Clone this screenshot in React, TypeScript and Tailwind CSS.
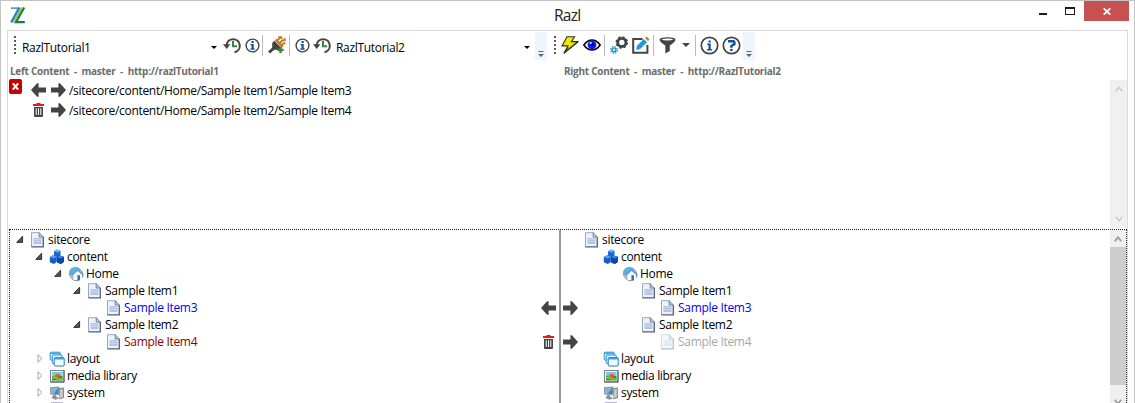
import React from "react";

const INK = "#444444";

function Arrow({ left = false }: { left?: boolean }) {
  return (
    <svg width="15" height="14" viewBox="0 0 15 14" className={left ? "shrink-0 -scale-x-100" : "shrink-0"}>
      <path d="M0 4.5H7.4V0.3H8.9L15 7L8.9 13.7H7.4V9.5H0Z" fill={INK} />
    </svg>
  );
}

function Trash() {
  return (
    <svg width="11" height="14" viewBox="0 0 11 14" className="shrink-0">
      <path d="M3.5 0H7.5V1H11V3H0V1H3.5Z" fill="#e01f10" />
      <path d="M1 4H10V13L9.3 14H1.7L1 13ZM2.7 5.2V12H3.7V5.2ZM5 5.2V12H6V5.2ZM7.3 5.2V12H8.3V5.2Z" fill={INK} fillRule="evenodd" />
    </svg>
  );
}

function History() {
  return (
    <svg width="19" height="17" viewBox="0 0 19 17" className="shrink-0">
      <path d="M3.6 8A6.6 6.6 0 1 1 11.5 15.2" fill="none" stroke={INK} strokeWidth="2" />
      <path d="M0 7.3H7.4L3.7 12Z" fill={INK} />
      <path d="M10 4V9.2H14" fill="none" stroke="#348a3c" strokeWidth="2" />
    </svg>
  );
}

function InfoSmall() {
  return (
    <svg width="15" height="15" viewBox="0 0 15 15" className="shrink-0">
      <circle cx="7.5" cy="7.5" r="6.4" fill="none" stroke={INK} strokeWidth="1.4" />
      <path d="M6.5 3H8.7V5H6.5ZM5.5 6H8.7V10.6H9.7V11.8H5.3V10.6H6.5V7.2H5.5Z" fill="#0b519c" />
    </svg>
  );
}

function InfoLarge() {
  return (
    <svg width="19" height="19" viewBox="0 0 19 19" className="shrink-0">
      <circle cx="9.5" cy="9.5" r="8.2" fill="none" stroke={INK} strokeWidth="1.7" />
      <path d="M8.5 4.4H10.7V6.4H8.5ZM7.2 7.5H10.7V13H11.9V14.4H7.1V13H8.5V8.9H7.2Z" fill="#0b519c" />
    </svg>
  );
}

function Help() {
  return (
    <svg width="19" height="19" viewBox="0 0 19 19" className="shrink-0">
      <circle cx="9.5" cy="9.5" r="8.2" fill="none" stroke={INK} strokeWidth="1.7" />
      <path d="M6 5.3H11.5L12.4 6.2V8L9.4 10.1V11.8" fill="none" stroke="#0b519c" strokeWidth="2.5" />
      <path d="M8.1 12.9H10.6V15.1H8.1Z" fill="#0b519c" />
    </svg>
  );
}

function Plug() {
  return (
    <svg width="18" height="18" viewBox="0 0 18 18" className="shrink-0">
      <path d="M7.6 3.6L14.8 10.8" stroke="#c57b20" strokeWidth="2.6" />
      <path d="M9 4.6L11.2 2.6V1.2H13.4V3M13.6 9.4L15.8 7.2H17.4M11.6 7L14.6 4.2H16.8V2.2" stroke="#c57b20" strokeWidth="1.9" fill="none" />
      <path d="M6.2 4.8L13.2 11.8L11.2 13.8H6.6L4.8 15L2.2 17.6L0 15.4L2.8 13L4.2 11.4V7Z" fill={INK} />
      <path d="M12.5 10.8V17M9.4 13.9H15.6" stroke="#2f8a35" strokeWidth="2.4" />
    </svg>
  );
}

function Bolt() {
  return (
    <svg width="18" height="18" viewBox="0 0 18 18" className="shrink-0">
      <path d="M6 .7H13.6L10.4 5.6H16.6L3 17L7 9.9H1Z" fill="#f0ea00" stroke="#333316" strokeWidth="1.1" />
      <path d="M17 6.2L3 17.4L7.2 11" fill="none" stroke="#333316" strokeWidth="1" />
    </svg>
  );
}

function Eye() {
  return (
    <svg width="18" height="12" viewBox="0 0 18 12" className="shrink-0">
      <path d="M.8 6Q4.5 1 9 1T17.2 6Q13.5 11 9 11T.8 6Z" fill="#fff" stroke="#050505" strokeWidth="1.6" />
      <circle cx="9" cy="5.8" r="4.4" fill="#0f1cf0" />
      <circle cx="9.6" cy="5.6" r="1.6" fill="#00006a" />
      <circle cx="7.7" cy="4" r="1.1" fill="#e8ecff" />
    </svg>
  );
}

function Gears() {
  return (
    <svg width="18" height="18" viewBox="0 0 18 18" className="shrink-0">
      <circle cx="11.8" cy="6.4" r="4.1" fill="none" stroke={INK} strokeWidth="2.8" />
      <circle cx="11.8" cy="6.4" r="5.6" fill="none" stroke={INK} strokeWidth="1.4" strokeDasharray="2.2 2.2" />
      <circle cx="4" cy="13.9" r="1.9" fill="none" stroke="#229bd8" strokeWidth="1.6" />
      <circle cx="4" cy="13.9" r="3.3" fill="none" stroke="#229bd8" strokeWidth="1.4" strokeDasharray="1.3 1.3" />
    </svg>
  );
}

function Edit() {
  return (
    <svg width="18" height="18" viewBox="0 0 18 18" className="shrink-0">
      <path d="M10.5 3H1.2V16.8H15.4V9" fill="none" stroke={INK} strokeWidth="2" />
      <path d="M4.2 14L5 9.8L11.8 3L15 6.2L8.2 13Z" fill="#1f9ade" />
      <path d="M13 2L14.6 .5L17.5 3.4L16 5Z" fill="#c57b20" />
    </svg>
  );
}

function Funnel() {
  return (
    <svg width="17" height="17" viewBox="0 0 17 17" className="shrink-0">
      <path d="M.4 2.6Q1.5 .3 8.5 .3T16.6 2.6Q16.4 5 10.8 8.6V14L6.3 16.6V8.6Q.6 5 .4 2.6Z" fill={INK} />
      <path d="M2.4 2.6Q4.5 1.5 8.5 1.5T14.6 2.6Q12.5 3.5 8.5 3.5T2.4 2.6Z" fill="#fff" />
    </svg>
  );
}

function Down({ wide = false }: { wide?: boolean }) {
  return (
    <svg width={wide ? 8 : 6} height={wide ? 4 : 3} viewBox="0 0 8 4" className="shrink-0">
      <path d="M0 0H8L4 4Z" fill={wide ? INK : "#000"} />
    </svg>
  );
}

function Grip() {
  return (
    <svg width="2" height="18" className="shrink-0" shapeRendering="crispEdges">
      {[0, 4, 8, 12, 16].map((y) => (
        <rect key={y} y={y} width="2" height="2" fill="#5d5d5d" />
      ))}
    </svg>
  );
}

function Overflow() {
  return (
    <div className="flex h-7 w-3 shrink-0 items-end justify-center rounded-r-[2px] bg-[#eef5fd] pb-[3px]">
      <svg width="6" height="6" viewBox="0 0 6 6">
        <path d="M0.5 0H5.5V1H0.5ZM0 3H6L3 6Z" fill="#666" />
      </svg>
    </div>
  );
}

const Sep = () => <div className="h-[21px] w-px shrink-0 bg-[#b9bcc4]" />;

type Kind = "doc" | "cubes" | "home" | "layout" | "media" | "system" | "templates";

function NodeIcon({ kind, faded }: { kind: Kind; faded?: boolean }) {
  return (
    <svg width="16" height="16" viewBox="0 0 16 16" className={faded ? "-ml-px shrink-0 opacity-40" : "-ml-px shrink-0"}>
      {kind === "doc" && (
        <>
          <path d="M1.5 .7H9.5L13.5 4.9V15H1.5Z" fill="#edf3fc" />
          <path d="M1.5 15V.7H9.5" fill="none" stroke="#9ba8bc" />
          <path d="M1.5 14.9H13.3V4.9" fill="none" stroke="#525f78" strokeWidth="1.3" />
          <path d="M9.2 .7V5H13.3Z" fill="#cbd6e8" stroke="#66748c" strokeWidth=".9" />
          <path d="M3.5 6H11.5V12H3.5Z" fill="#b4c4e0" />
          <path d="M3.5 7.5H11.5M3.5 9.5H11.5" stroke="#d5dff0" strokeWidth=".7" />
        </>
      )}
      {kind === "cubes" && (
        <>
          <path d="M5 2.2L8 .6L11.5 1.8V6.5L8.5 8.5L5 7Z" fill="#1a68d0" />
          <path d="M5 2.2L8 .6L11.5 1.8L8.6 3.4Z" fill="#6db4f5" />
          <path d="M.8 8L4 6.2L7.8 7.6V13L4.8 15L.8 13.2Z" fill="#145cc6" />
          <path d="M.8 8L4 6.2L7.8 7.6L4.9 9.4Z" fill="#5ba6f0" />
          <path d="M8 8L11 6.4L15 7.8V13L11.8 15.3L8 13.6Z" fill="#0b47ac" />
          <path d="M8 8L11 6.4L15 7.8L11.8 9.6Z" fill="#3a86e0" />
        </>
      )}
      {kind === "home" && (
        <>
          <ellipse cx="8.8" cy="8.8" rx="6.7" ry="6.4" fill="#8f979f" />
          <ellipse cx="7.4" cy="7.4" rx="6.6" ry="6.5" fill="#a9b7c3" />
          <path d="M1 7Q2 1 7.6 1Q11 1 13 4L9 4L4 9L1.2 9Z" fill="#5db2e4" />
          <path d="M5.4 8L9.7 4.6L14 8V14H5.4Z" fill="#f8fbfe" />
          <path d="M4 9L9.6 4L15.2 9" fill="none" stroke="#5b9ccc" strokeWidth="1.4" />
          <path d="M9.4 9.2H12V14H9.4Z" fill="#2c79b7" />
        </>
      )}
      {kind === "layout" && (
        <>
          <rect x="1.2" y="1.2" width="10" height="8" rx="1" fill="#e9f6ff" stroke="#2b97dc" />
          <path d="M1 2.3H11.4" stroke="#41a9e8" strokeWidth="1.7" />
          <rect x="3.2" y="4" width="10" height="8.5" rx="1" fill="#e9f6ff" stroke="#238ed5" />
          <rect x="5.2" y="6.6" width="10" height="8.4" rx="1" fill="#f4faff" stroke="#1680ca" />
          <path d="M5.2 7.6H15.2" stroke="#36a4e8" strokeWidth="1.8" />
        </>
      )}
      {kind === "media" && (
        <>
          <rect x="1.5" y="2.5" width="13.5" height="11.5" fill="#f5f6f7" stroke="#7a838d" />
          <path d="M1.5 14H15V2.5" fill="none" stroke="#4d565f" />
          <rect x="3" y="4" width="10.5" height="4" fill="#7cc6ee" />
          <rect x="3" y="8" width="10.5" height="4.5" fill="#3d8b2c" />
          <path d="M3 9Q6 7 8 9T13.5 10V12.5H10Q7 10 3 11Z" fill="#7fbf45" />
          <ellipse cx="8.6" cy="7.7" rx="2.6" ry="1.6" fill="#ec5a1c" />
        </>
      )}
      {kind === "system" && (
        <>
          <path d="M9.8 3L15 2.4V13L10.4 14.6Z" fill="#8d9196" />
          <path d="M11 4.5L13.8 4V12.2L11 13Z" fill="#c8cccf" />
          <path d="M1 2.2L10.4 1.5V10.2L1.2 9.4Z" fill="#929aa2" />
          <path d="M2 3L9.4 2.5V9L2 8.4Z" fill="#4a84c0" />
          <path d="M2 3L9.4 2.5L5 8.6H2Z" fill="#86b4dc" />
          <path d="M4.4 10H7.2V11.6L10.4 13.2L6.4 14.8L2.4 13Z" fill="#8d9399" />
        </>
      )}
      {kind === "templates" && (
        <>
          <rect x="2" y=".5" width="12" height="14" fill="#7668a0" />
          <rect x="3.5" y="2" width="9" height="4" fill="#a296c6" />
        </>
      )}
    </svg>
  );
}

type Row = { label: string; kind: Kind; indent: string; open: boolean | null; tone: string };

const rows: Row[] = [
  { label: "sitecore", kind: "doc", indent: "pl-0", open: true, tone: "text-black" },
  { label: "content", kind: "cubes", indent: "pl-[19px]", open: true, tone: "text-black" },
  { label: "Home", kind: "home", indent: "pl-[38px]", open: true, tone: "text-black" },
  { label: "Sample Item1", kind: "doc", indent: "pl-[57px]", open: true, tone: "text-black" },
  { label: "Sample Item3", kind: "doc", indent: "pl-[76px]", open: null, tone: "text-[#0000ff]" },
  { label: "Sample Item2", kind: "doc", indent: "pl-[57px]", open: true, tone: "text-black" },
  { label: "Sample Item4", kind: "doc", indent: "pl-[76px]", open: null, tone: "text-[#8b0000]" },
  { label: "layout", kind: "layout", indent: "pl-[19px]", open: false, tone: "text-black" },
  { label: "media library", kind: "media", indent: "pl-[19px]", open: false, tone: "text-black" },
  { label: "system", kind: "system", indent: "pl-[19px]", open: false, tone: "text-black" },
  { label: "", kind: "templates", indent: "pl-[19px]", open: null, tone: "text-black" },
];

function Tree({ right = false }: { right?: boolean }) {
  return (
    <div className="pt-px">
      {rows.map((r, i) => {
        const missing = right && r.label === "Sample Item4";
        return (
          <div key={i} className={`flex h-[17px] items-center ${r.indent}`}>
            {!right && (
              <svg width="15" height="9" viewBox="0 0 15 9" className="shrink-0">
                {r.open === true && <path d="M6.6 1.2V7.4H.7Z" fill="#555" stroke="#262626" strokeWidth=".9" />}
                {r.open === false && <path d="M3 .7V8.3L7 4.5Z" fill="#fff" stroke="#a6a6a6" />}
              </svg>
            )}
            <NodeIcon kind={r.kind} faded={missing} />
            <span className={`ml-[2px] leading-[17px] ${missing ? "text-[#a8a8a8]" : r.tone}`}>{r.label}</span>
          </div>
        );
      })}
    </div>
  );
}

function Chevron({ down = false, dim = false }: { down?: boolean; dim?: boolean }) {
  return (
    <svg width="8" height="6" viewBox="0 0 8 6" className={down ? "shrink-0 rotate-180" : "shrink-0"}>
      <path d="M.7 5.2L4 1.4L7.3 5.2" fill="none" stroke={dim ? "#cfcfcf" : "#9a9a9a"} strokeWidth="1.7" />
    </svg>
  );
}

export default function App() {
  return (
    <div className="flex h-[403px] w-[1135px] flex-col overflow-hidden border-x border-t border-[#c3c3c3] bg-white font-['Open_Sans','Noto_Sans',sans-serif] text-[12px] tracking-[-0.31px] whitespace-nowrap text-black">
      <header className="flex h-[29px] shrink-0 items-start">
        <div className="w-[553px] pt-[6px] pl-[9px]">
          <svg width="16" height="17" viewBox="0 0 16 17">
            <path d="M1 1.2H8.6" stroke="#5aa0d0" strokeWidth="1.8" />
            <path d="M9.4 .5L1.2 15.5" fill="none" stroke="#2f7fc0" strokeWidth="2.4" />
            <path d="M11.8 .5L3.6 15.2" stroke="#8cc34e" strokeWidth="1.6" />
            <path d="M14.2 .5L6 15.2H14.8" fill="none" stroke="#287936" strokeWidth="2.2" />
          </svg>
        </div>
        <h1 className="w-[480px] pt-[2px] text-[15.5px] leading-6 tracking-[-0.7px] text-[#222]">Razl</h1>
        <svg width="50" height="20" shapeRendering="crispEdges" className="shrink-0">
          <path d="M5 12H13V14H5Z" fill="#1d1d1d" />
          <path d="M31 6H41V14H31ZM32 8V13H40V8Z" fill="#1d1d1d" fillRule="evenodd" />
        </svg>
        <div className="flex h-5 w-[45px] items-center justify-center bg-[#c75050]">
          <svg width="8" height="7" viewBox="0 0 8 7" className="mt-px">
            <path d="M.7 .3L7.3 6.7M7.3 .3L.7 6.7" stroke="#fff" strokeWidth="1.7" />
          </svg>
        </div>
      </header>

      <main className="mx-[6px] flex min-h-0 flex-1 flex-col border-x border-t border-[#d9d9d9]">
        <div className="flex h-[32px] shrink-0 items-start pt-px">
          <div className="flex h-[26px] w-[527px] shrink-0 items-center pl-[6px]">
            <Grip />
            <span className="mt-[5px] ml-[6px] w-[189px]">RazlTutorial1</span>
            <div className="mt-[4px] flex"><Down /></div>
            <div className="ml-[6px] flex"><History /></div>
            <div className="ml-[3px] flex"><InfoSmall /></div>
            <div className="ml-[2px] flex"><Sep /></div>
            <div className="ml-[5px] flex"><Plug /></div>
            <div className="ml-[3px] flex"><Sep /></div>
            <div className="ml-[5px] flex"><InfoSmall /></div>
            <div className="ml-[3px] flex"><History /></div>
            <span className="mt-[5px] ml-[4px] w-[188px]">RazlTutorial2</span>
            <div className="mt-[4px] flex"><Down /></div>
          </div>
          <Overflow />
          <div className="ml-[7px] flex h-[26px] w-[189px] shrink-0 items-center">
            <Grip />
            <div className="ml-[5px] flex"><Bolt /></div>
            <div className="ml-[4px] flex"><Eye /></div>
            <div className="ml-[3px] flex"><Sep /></div>
            <div className="ml-[5px] flex"><Gears /></div>
            <div className="ml-[4px] flex"><Edit /></div>
            <div className="ml-[3px] flex"><Sep /></div>
            <div className="ml-[5px] flex"><Funnel /></div>
            <div className="ml-[6px] flex"><Down wide /></div>
            <div className="ml-[5px] flex"><Sep /></div>
            <div className="ml-[4px] flex"><InfoLarge /></div>
            <div className="ml-[3px] flex"><Help /></div>
          </div>
          <Overflow />
        </div>

        <div className="flex h-[17px] shrink-0 items-center pl-[2px] text-[10px] font-bold tracking-[-0.28px] whitespace-pre text-[#6d6d6d]">
          <span className="w-[554px]">Left Content  -  master  -  http://razlTutorial1</span>
          <span>Right Content  -  master  -  http://RazlTutorial2</span>
        </div>

        <section className="flex h-[149px] shrink-0">
          <div className="-mt-px ml-px flex h-[15px] w-[13px] items-center justify-center rounded-[2px] bg-[#c90000]">
            <svg width="7" height="7" viewBox="0 0 7 7"><path d="M.8 .3L6.2 6.7M6.2 .3L.8 6.7" stroke="#fff" strokeWidth="2" /></svg>
          </div>
          <div className="flex-1 pl-[9px]">
            <div className="flex h-5 items-center">
              <Arrow left /><span className="w-[5px]" /><Arrow />
              <span className="mt-[2px] ml-[3px]">/sitecore/content/Home/Sample Item1/Sample Item3</span>
            </div>
            <div className="flex h-5 items-center">
              <span className="w-[2px]" /><Trash /><span className="w-[7px]" /><Arrow />
              <span className="mt-[2px] ml-[3px]">/sitecore/content/Home/Sample Item2/Sample Item4</span>
            </div>
          </div>
          <div className="flex h-[148px] w-[17px] flex-col items-center justify-between bg-[#f0f0f0] py-[6px]">
            <Chevron dim />
            <Chevron dim down />
          </div>
        </section>

        <section className="ml-px flex min-h-0 flex-1 overflow-hidden border-x border-t border-dotted border-[#222]">
          <div className="w-[531px] shrink-0 pl-[6px]"><Tree /></div>
          <div className="w-[18px] shrink-0 pt-[69px]">
            <div className="flex h-[17px] items-center"><Arrow left /></div>
            <div className="mt-[17px] flex h-[17px] items-center pl-[2px]"><Trash /></div>
          </div>
          <div className="w-[2px] shrink-0 bg-[#999]" />
          <div className="w-[24px] shrink-0 pt-[69px] pl-[2px]">
            <div className="flex h-[17px] items-center"><Arrow /></div>
            <div className="mt-[17px] flex h-[17px] items-center"><Arrow /></div>
          </div>
          <div className="flex-1"><Tree right /></div>
          <div className="flex w-4 shrink-0 flex-col items-center bg-[#f0f0f0]">
            <div className="flex h-[17px] shrink-0 items-center"><Chevron /></div>
            <div className="h-[138px] w-full shrink-0 bg-[#cdcdcd]" />
            <div className="flex h-[34px] shrink-0 items-center"><Chevron down /></div>
          </div>
        </section>
      </main>
    </div>
  );
}
